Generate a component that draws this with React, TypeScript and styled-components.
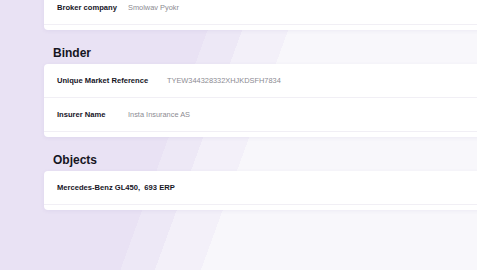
import React from "react";
import styled, { createGlobalStyle } from "styled-components";

const GlobalStyle = createGlobalStyle`
  html, body {
    margin: 0;
    padding: 0;
    width: 477px;
    height: 270px;
    overflow: hidden;
    font-family: "Liberation Sans", Arial, Helvetica, sans-serif;
  }
`;

type Field = { label: string; value?: string; labelWidth?: number };

const sections: { title?: string; rows: Field[] }[] = [
  { rows: [{ label: "Broker company", value: "Smolwav Pyokr", labelWidth: 71 }] },
  {
    title: "Binder",
    rows: [
      { label: "Unique Market Reference", value: "TYEW344328332XHJKDSFH7834", labelWidth: 110 },
      { label: "Insurer Name", value: "Insta Insurance AS", labelWidth: 71 },
    ],
  },
  { title: "Objects", rows: [{ label: "Mercedes-Benz GL450,  693 ERP" }] },
];

const App: React.FC = () => {
  return (
    <Viewport>
      <GlobalStyle />
      <Content>
        {sections.map((section, i) => (
          <Section key={i}>
            {section.title && <Heading>{section.title}</Heading>}
            <Card>
              {section.rows.map((row) => (
                <Row key={row.label}>
                  <Label $width={row.labelWidth}>{row.label}</Label>
                  {row.value && <Value>{row.value}</Value>}
                </Row>
              ))}
            </Card>
          </Section>
        ))}
      </Content>
    </Viewport>
  );
};

const Viewport = styled.div`
  width: 477px;
  height: 270px;
  overflow: hidden;
  background: linear-gradient(
    110deg,
    #e9e2f4 0%,
    #e9e2f4 38%,
    #ede8f6 38%,
    #ede8f6 44%,
    #f3f0f9 44%,
    #f3f0f9 52%,
    #f8f7fb 52%,
    #f8f7fb 100%
  );
`;

const Content = styled.div`
  display: flex;
  flex-direction: column;
  padding-left: 44px;
  transform: translateY(-9px);
`;

const Section = styled.section`
  display: flex;
  flex-direction: column;
`;

const Heading = styled.h2`
  margin: 16px 0 4px 9px;
  font-size: 12px;
  line-height: 14px;
  font-weight: 700;
  color: #16151f;
`;

const Card = styled.div`
  width: 460px;
  background: #ffffff;
  border-radius: 4px;
  padding-bottom: 5px;
  box-shadow: 0 1px 4px rgba(90, 70, 150, 0.07);
`;

const Row = styled.div`
  display: flex;
  align-items: center;
  height: 33px;
  padding: 0 13px;
  border-bottom: 1px solid #f1eff5;
`;

const Label = styled.span<{ $width?: number }>`
  min-width: ${(p) => (p.$width ? `${p.$width}px` : "auto")};
  font-size: 7.6px;
  font-weight: 700;
  color: #16151f;
  white-space: pre;
`;

const Value = styled.span`
  font-size: 7.4px;
  color: #8c8b92;
  white-space: pre;
`;

export default App;
